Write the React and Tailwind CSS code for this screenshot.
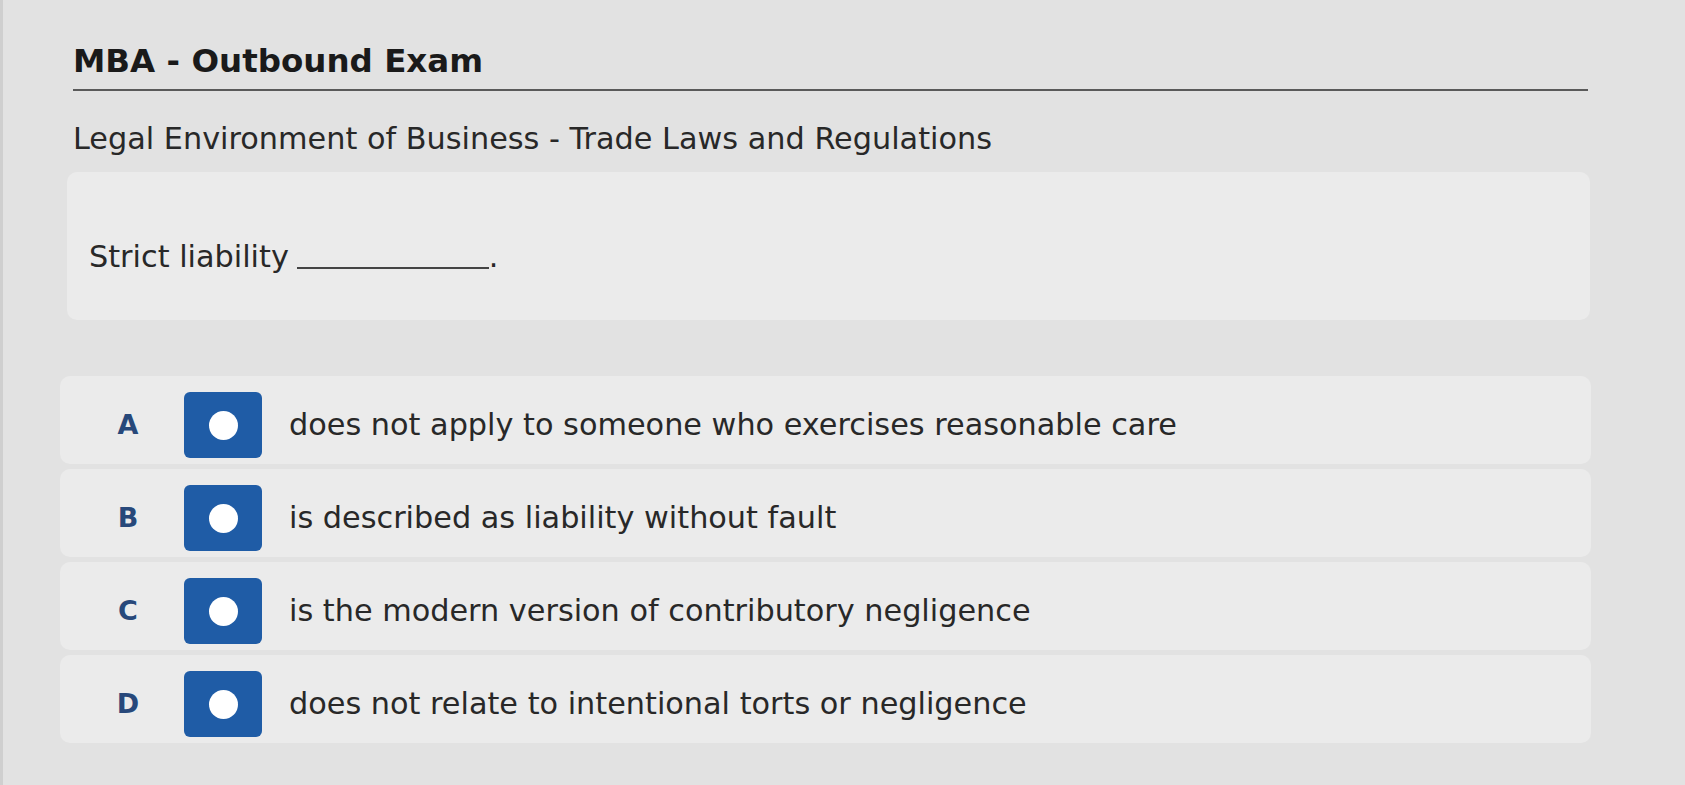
import React from "react";

const options = [
  { k: "A", t: "does not apply to someone who exercises reasonable care" },
  { k: "B", t: "is described as liability without fault" },
  { k: "C", t: "is the modern version of contributory negligence" },
  { k: "D", t: "does not relate to intentional torts or negligence" },
];

export default function App() {
  return (
    <div
      className="w-[1685px] h-[785px] overflow-hidden bg-[#e2e2e2] border-l-[3px] border-[#cfcfcf] text-[#282828]"
      style={{ fontFamily: '"DejaVu Sans", Verdana, sans-serif' }}
    >
      <div className="ml-[57px] w-[1531px] pt-[41px]">
        <div className="ml-[13px] w-[1515px] border-b-2 border-[#5a5a5a] pb-[8px]">
          <h1 className="text-[32.5px] leading-[40px] font-bold text-[#1a1a1a]">
            MBA - Outbound Exam
          </h1>
        </div>
        <div className="ml-[13px] mt-[29px] text-[30.3px] leading-[38px]">
          Legal Environment of Business - Trade Laws and Regulations
        </div>
        <div className="ml-[7px] mt-[14px] w-[1523px] h-[148px] rounded-[10px] bg-[#ebebeb] pl-[22px] pt-[66px]">
          <div className="flex items-end text-[30.3px] leading-[38px]">
            <span>Strict liability</span>
            <span className="ml-[8px] mb-[7px] w-[192px] border-b-2 border-[#444]"></span>
            <span>.</span>
          </div>
        </div>
        <div className="mt-[56px] flex flex-col gap-[5px]">
          {options.map((o) => (
            <div
              key={o.k}
              className="h-[88px] w-[1531px] rounded-[10px] bg-[#ebebeb] flex items-center pl-[55px] pt-[10px]"
            >
              <span className="w-[26px] text-center text-[27px] font-bold text-[#27487a]">
                {o.k}
              </span>
              <div className="ml-[43px] w-[78px] h-[66px] rounded-[6px] bg-[#1f5ca6] flex items-center justify-center">
                <div className="w-[29px] h-[29px] rounded-full bg-white"></div>
              </div>
              <span className="ml-[27px] text-[30.3px] leading-[38px]">
                {o.t}
              </span>
            </div>
          ))}
        </div>
      </div>
    </div>
  );
}
